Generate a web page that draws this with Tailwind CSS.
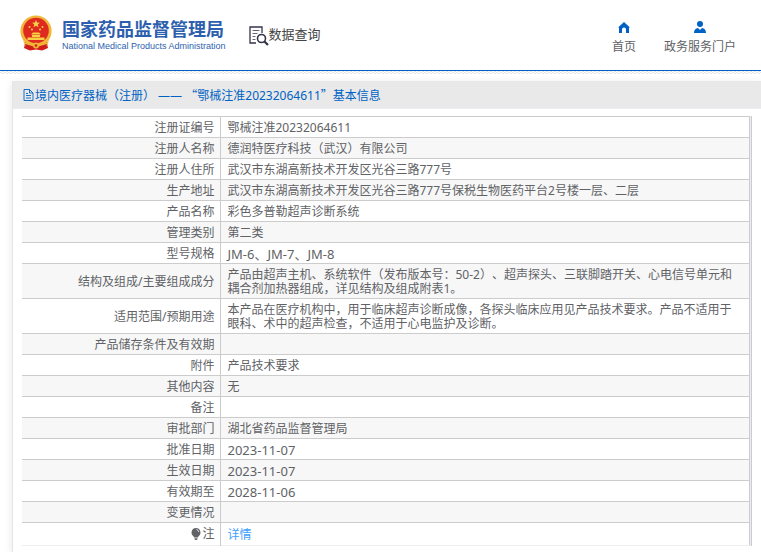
<!DOCTYPE html>
<html lang="zh-CN">
<head>
  <meta charset="utf-8">
  <meta name="viewport" content="width=device-width, initial-scale=1">
  <title>国家药品监督管理局 数据查询</title>
  <script src="https://cdn.jsdelivr.net/npm/@tailwindcss/browser@4"></script>
</head>
<body class="flex min-h-screen flex-col bg-white overflow-x-hidden font-['Noto_Sans','Noto_Sans_CJK_SC',sans-serif] text-xs text-[#606266] [text-spacing-trim:space-all]">
  <header class="flex h-[71px] items-start justify-between border-b border-[#0062c4] pl-5 pr-[25px]">
    <div class="flex items-start">
      <a href="#" class="flex items-start pt-[15px]">
        <!-- emblem -->
        <svg class="w-8 h-9" viewBox="0 0 32 36">
          <path d="M6 24h20l2 9-6 2.500-6-1-6 1L4 33z" fill="#d31f1a"/>
          <circle cx="16" cy="16" r="15.6" fill="#f0b638"/>
          <circle cx="16" cy="15.5" r="12.8" fill="#de2a1f"/>
          <path d="M16 5l1.100 2.600 2.800.2-2.100 1.800.6 2.700-2.400-1.500-2.400 1.500.6-2.700-2.100-1.800 2.800-.2z" fill="#f7cf45"/>
          <g fill="#f7cf45">
            <circle cx="9.500" cy="12" r="1"/><circle cx="22.500" cy="12" r="1"/>
            <circle cx="12" cy="14.500" r="1"/><circle cx="20" cy="14.500" r="1"/>
            <path d="M11 19.500l2-2h6l2 2zM12 20h8v2h-8zM7.500 22.500h17V25h-17z"/>
          </g>
          <path d="M3 25c3 4 8 5 13 5s10-1 13-5l-2 6-5 1-6-2-6 2-5-1z" fill="#f0b638"/>
          <path d="M5 29l7 2 1 4-7-1zM27 29l-7 2-1 4 7-1z" fill="#cf1f1a"/>
          <circle cx="16" cy="30.500" r="3" fill="#f0b638"/>
          <circle cx="16" cy="30.500" r="1.300" fill="#d31f1a"/>
        </svg>
        <span class="ml-[10px] block text-[#2e5fae]">
          <span class="block text-lg leading-[26px] font-bold font-['Noto_Sans_CJK_SC',sans-serif]">国家药品监督管理局</span>
          <span class="block text-[9px] leading-[11px] font-medium font-['Liberation_Sans',sans-serif] whitespace-nowrap">National Medical Products Administration</span>
        </span>
      </a>
      <a href="#" class="ml-[23px] flex items-start pt-5 text-[#444]">
        <svg class="mt-[6px] w-5 h-5" viewBox="0 0 20 20" fill="none" stroke="#33334a">
          <path d="M7 17H1V1h12v6" stroke-width="1.300"/>
          <path d="M3.500 4.500h7M3.500 7.500h5M3.500 10.500h3M3.500 13.500h3" stroke="#66667a"/>
          <circle cx="12.500" cy="12.500" r="4" stroke-width="1.600"/>
          <path d="M15.500 15.500L19 19" stroke-width="2.200"/>
        </svg>
        <span class="text-[13px] leading-7">数据查询</span>
      </a>
    </div>
    <nav class="flex gap-7 pt-[21px] leading-[18px]">
      <a href="#" class="flex flex-col items-center gap-[5px]">
        <svg class="w-3 h-3" viewBox="0 0 12 12" fill="#0062c4"><path d="M6 1L0 6.500h1V12h3V8.500a2 2 0 0 1 4 0V12h3V6.500h1z"/></svg>
        <span>首页</span>
      </a>
      <a href="#" class="flex flex-col items-center gap-[5px]">
        <svg class="w-3 h-3" viewBox="0 0 12 12" fill="#0062c4"><circle cx="6" cy="3" r="3"/><path d="M0 12c0-3 1.500-4.500 4-5l2 2 2-2c2.500.5 4 2 4 5z"/></svg>
        <span>政务服务门户</span>
      </a>
    </nav>
  </header>
  <div class="h-[3px] bg-[conic-gradient(#e6e6e6_25%,#fff_0_50%,#e6e6e6_0_75%,#fff_0)] bg-[length:4px_2px]"></div>

  <main class="mt-[7px] ml-3 flex-1 border-l border-[#e6e6e6] shadow-[0_2px_8px_rgba(0,0,0,0.1)]">
    <h1 class="flex h-7 items-center border-b border-[#ebebf2] bg-[#e9e9e9] pl-[10px] pt-px text-[#0062c4]">
      <svg class="mr-px w-[11px] h-3" viewBox="0 0 11 12" fill="none" stroke="#0062c4" stroke-width=".9">
        <path d="M1 .5h5.500L10 4v7.500H1zM6.500.5V4H10M3 4.500h2M3 6.500h5M3 9h5"/>
      </svg>
      <span>境内医疗器械（注册） —— <span class="font-['Noto_Sans_CJK_SC',sans-serif]">“</span>鄂械注准20232064611<span class="font-['Noto_Sans_CJK_SC',sans-serif]">”</span>基本信息</span>
    </h1>
    <div class="mt-[7px] ml-[9px] mr-[9px] border-r border-[#ccccd0] bg-[#ebebf2] pr-px">
      <table class="w-full table-fixed border-collapse border-t border-r border-[#ccc] bg-white leading-[14px]">
        <colgroup><col class="w-[198px]"><col></colgroup>
        <tbody class="[&_tr]:border-b [&_tr]:border-[#ccc] [&_tr]:h-[21px] [&_tr:nth-child(even)]:bg-[#f7f7f7] [&_th]:border-r [&_th]:border-[#ccc] [&_th]:pt-1 [&_th]:pb-[2px] [&_th]:pr-[5px] [&_th]:text-right [&_th]:font-normal [&_td]:pt-1 [&_td]:pb-[2px] [&_td]:pl-[7px] [&_td]:pr-[10px]">
          <tr><th scope="row">注册证编号</th><td>鄂械注准20232064611</td></tr>
          <tr><th scope="row">注册人名称</th><td>德润特医疗科技（武汉）有限公司</td></tr>
          <tr><th scope="row">注册人住所</th><td>武汉市东湖高新技术开发区光谷三路777号</td></tr>
          <tr><th scope="row">生产地址</th><td>武汉市东湖高新技术开发区光谷三路777号保税生物医药平台2号楼一层、二层</td></tr>
          <tr><th scope="row">产品名称</th><td>彩色多普勒超声诊断系统</td></tr>
          <tr><th scope="row">管理类别</th><td>第二类</td></tr>
          <tr><th scope="row">型号规格</th><td class="text-[13px]">JM-6、JM-7、JM-8</td></tr>
          <tr><th scope="row">结构及组成/主要组成成分</th><td>产品由超声主机、系统软件（发布版本号：50-2）、超声探头、三联脚踏开关、心电信号单元和耦合剂加热器组成，详见结构及组成附表1。</td></tr>
          <tr><th scope="row">适用范围/预期用途</th><td>本产品在医疗机构中，用于临床超声诊断成像，各探头临床应用见产品技术要求。产品不适用于眼科、术中的超声检查，不适用于心电监护及诊断。</td></tr>
          <tr><th scope="row">产品储存条件及有效期</th><td></td></tr>
          <tr><th scope="row">附件</th><td>产品技术要求</td></tr>
          <tr><th scope="row">其他内容</th><td>无</td></tr>
          <tr><th scope="row">备注</th><td></td></tr>
          <tr><th scope="row">审批部门</th><td>湖北省药品监督管理局</td></tr>
          <tr><th scope="row">批准日期</th><td class="text-[13px]">2023-11-07</td></tr>
          <tr><th scope="row">生效日期</th><td class="text-[13px]">2023-11-07</td></tr>
          <tr><th scope="row">有效期至</th><td class="text-[13px]">2028-11-06</td></tr>
          <tr><th scope="row">变更情况</th><td></td></tr>
          <tr class="h-[23px]! border-[#eee]!">
            <th scope="row">
              <span class="inline-flex items-center">
                <svg class="w-3 h-3" viewBox="0 0 12 12"><path d="M6 0a4.500 4.500 0 0 1 2.500 8.200L8 9.500H4l-.5-1.300A4.500 4.500 0 0 1 6 0z" fill="#606266"/><path d="M4.500 10.200h3v1l-1 .8h-1l-1-.8z" fill="#606266"/><path d="M6.500 1.500a3 3 0 0 1 2.300 2.500" fill="none" stroke="#fff" stroke-width=".8"/></svg>注
              </span>
            </th>
            <td><a href="#" class="text-[#409eff]">详情</a></td>
          </tr>
        </tbody>
      </table>
    </div>
  </main>
</body>
</html>
